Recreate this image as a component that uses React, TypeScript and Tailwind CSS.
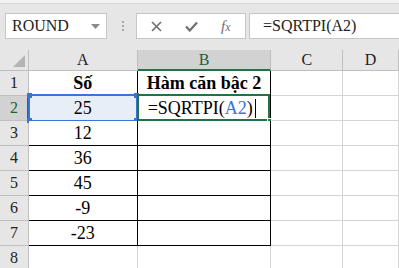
const cols = [
  { key: 'A', w: 'w-[109px]' },
  { key: 'B', w: 'w-[134px]' },
  { key: 'C', w: 'w-[72px]' },
  { key: 'D', w: 'w-[56px]' },
];

const data: { a: string; b: string }[] = [
  { a: 'Số', b: 'Hàm căn bậc 2' },
  { a: '25', b: '' },
  { a: '12', b: '' },
  { a: '36', b: '' },
  { a: '45', b: '' },
  { a: '-9', b: '' },
  { a: '-23', b: '' },
  { a: '', b: '' },
];

function Corner({ className }: { className: string }) {
  return <span className={`absolute h-[5px] w-[5px] bg-[#3b73d6] ${className}`} />;
}

function Toolbar() {
  return (
    <div className="flex h-[50px] flex-col bg-[#e6e6e6]">
      <div className="h-[4px] border-b border-[#d9d9d9] bg-[#f2f2f2]" />
      <div className="mt-[9px] flex h-[26px] items-stretch">
        <div className="ml-[5px] flex w-[102px] items-center justify-between border border-[#c6c6c6] bg-white pl-[6px] pr-[6px] text-[16px] text-[#222]">
          <span>ROUND</span>
          <svg width="9" height="5" viewBox="0 0 9 5">
            <path d="M0 0 L9 0 L4.5 5 Z" fill="#8a8a8a" />
          </svg>
        </div>
        <div className="ml-[14px] flex w-[3px] flex-col items-center justify-center gap-[2px]">
          <span className="h-[2px] w-[2px] bg-[#a8a8a8]" />
          <span className="h-[2px] w-[2px] bg-[#a8a8a8]" />
          <span className="h-[2px] w-[2px] bg-[#a8a8a8]" />
        </div>
        <div className="ml-[12px] flex w-[110px] items-center border border-[#c6c6c6] bg-white">
          <svg className="ml-[14px]" width="11" height="11" viewBox="0 0 11 11">
            <path d="M1 1 L10 10 M10 1 L1 10" stroke="#6e6e6e" strokeWidth="1.6" />
          </svg>
          <svg className="ml-[23px]" width="13" height="11" viewBox="0 0 13 11">
            <path d="M1 5.5 L4.8 9.5 L12 1.5" stroke="#6e6e6e" strokeWidth="2.2" fill="none" />
          </svg>
          <span className="ml-[23px] text-[15px] italic text-[#6e6e6e]">
            f<span className="text-[12px]">x</span>
          </span>
        </div>
        <div className="ml-[3px] flex flex-1 items-center border border-r-0 border-[#c6c6c6] bg-white pl-[13px] text-[16px] text-[#222]">
          =SQRTPI(A2)
        </div>
      </div>
    </div>
  );
}

function HeaderRow() {
  return (
    <div className="flex h-[21px]">
      <div className="relative w-[29px] border-r border-b border-[#bfbfbf] bg-[#e6e6e6]">
        <svg className="absolute right-[3px] bottom-[3px]" width="12" height="12" viewBox="0 0 12 12">
          <path d="M12 0 L12 12 L0 12 Z" fill="#b4b4b4" />
        </svg>
      </div>
      {cols.map((c) =>
        c.key === 'B' ? (
          <div
            key={c.key}
            className={`${c.w} flex items-center justify-center border-r border-b-2 border-r-[#bfbfbf] border-b-[#217346] bg-[#d2d2d2] pt-[1px] text-[16px] text-[#1e5f3b]`}
          >
            {c.key}
          </div>
        ) : (
          <div
            key={c.key}
            className={`${c.w} flex items-center justify-center border-r border-b border-[#bfbfbf] bg-[#e6e6e6] text-[16px] text-[#222]`}
          >
            {c.key}
          </div>
        )
      )}
    </div>
  );
}

function Row({ n, a, b }: { n: number; a: string; b: string }) {
  const inTable = n <= 7;
  const sel = n === 2;
  const edge = inTable ? 'border-black' : 'border-[#d4d4d4]';
  return (
    <div className="flex h-[25px]">
      <div
        className={
          sel
            ? 'flex w-[29px] items-center justify-center border-r-2 border-b border-r-[#217346] border-b-[#bfbfbf] bg-[#d2d2d2] pl-[1px] text-[16px] text-[#1e5f3b]'
            : 'flex w-[29px] items-center justify-center border-r border-b border-[#bfbfbf] bg-[#e6e6e6] text-[16px] text-[#222]'
        }
      >
        {n}
      </div>
      <div
        className={`relative flex w-[109px] items-center justify-center border-r border-b ${edge} ${
          sel ? 'bg-[#e8eef8]' : 'bg-white'
        } text-[18px] text-black ${n === 1 ? 'font-bold' : ''}`}
      >
        {a}
        {sel && (
          <div className="absolute -top-[2px] -left-[1px] -right-[1px] -bottom-[2px] border-2 border-[#3b73d6]">
            <Corner className="-top-[3px] -left-[3px]" />
            <Corner className="-top-[3px] -right-[3px]" />
            <Corner className="-bottom-[3px] -left-[3px]" />
            <Corner className="-bottom-[3px] -right-[3px]" />
          </div>
        )}
      </div>
      <div
        className={`relative flex w-[134px] items-center border-r border-b ${edge} bg-white text-[18px] text-black ${
          n === 1 ? 'justify-center font-bold' : 'justify-start pl-[10px]'
        }`}
      >
        {b}
        {sel && (
          <>
            <span className="whitespace-nowrap">
              =SQRTPI(<span className="text-[#3b73d6]">A2</span>)
            </span>
            <span className="ml-[2px] h-[19px] w-px bg-black" />
            <div className="absolute -top-[2px] -left-[1px] right-0 -bottom-[1px] border-2 border-[#217346]">
              <span className="absolute -right-[4px] -bottom-[4px] h-[5px] w-[5px] border border-white bg-[#217346]" />
            </div>
          </>
        )}
      </div>
      <div className="w-[72px] border-r border-b border-[#d4d4d4] bg-white" />
      <div className="w-[56px] border-r border-b border-[#d4d4d4] bg-white" />
    </div>
  );
}

export default function App() {
  return (
    <div className="h-[268px] w-[399px] overflow-hidden bg-white font-['Liberation_Serif','Times_New_Roman',serif]">
      <Toolbar />
      <HeaderRow />
      {data.map((r, i) => (
        <Row key={i} n={i + 1} a={r.a} b={r.b} />
      ))}
    </div>
  );
}
